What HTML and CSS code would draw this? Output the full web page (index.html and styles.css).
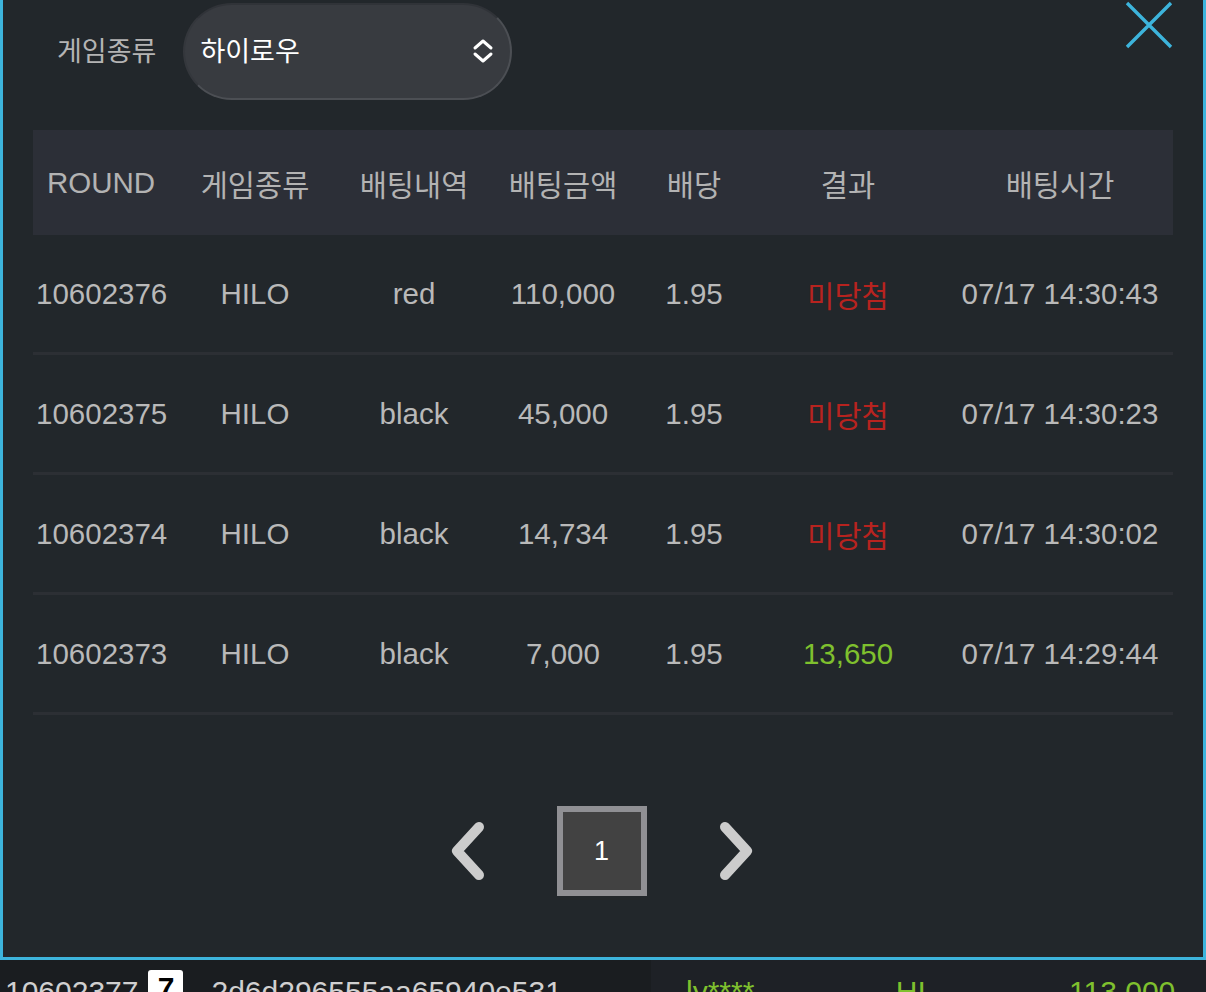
FILE: index.html
```html
<!DOCTYPE html>
<html lang="ko">
  <head>
    <meta charset="UTF-8">
    <title>배팅내역</title>
    <link rel="stylesheet" href="styles.css">
  </head>
  <body>
    <div class="modal">
      <a class="modal__close" href="#" title="닫기">
        <svg width="50" height="50" viewBox="0 0 50 50"><path d="M3 3 L47 47 M47 3 L3 47" stroke="#3db4dc" stroke-width="3.4" fill="none"/></svg>
      </a>
      <div class="filter">
        <span class="filter__label">게임종류</span>
        <div class="filter__select">
          <span>하이로우</span>
          <svg width="22" height="26" viewBox="0 0 22 26"><path d="M3 10 L11 3 L19 10 M3 16 L11 23 L19 16" stroke="#fff" stroke-width="3" fill="none" stroke-linecap="round" stroke-linejoin="round"/></svg>
        </div>
      </div>
      <table class="history">
        <colgroup>
          <col style="width:136px"><col style="width:172px"><col style="width:146px"><col style="width:152px"><col style="width:110px"><col style="width:198px"><col>
        </colgroup>
        <thead>
          <tr><th class="first">ROUND</th><th>게임종류</th><th>배팅내역</th><th>배팅금액</th><th>배당</th><th>결과</th><th>배팅시간</th></tr>
        </thead>
        <tbody>
          <tr><td class="first">10602376</td><td>HILO</td><td>red</td><td>110,000</td><td>1.95</td><td class="lose">미당첨</td><td>07/17 14:30:43</td></tr>
          <tr><td class="first">10602375</td><td>HILO</td><td>black</td><td>45,000</td><td>1.95</td><td class="lose">미당첨</td><td>07/17 14:30:23</td></tr>
          <tr><td class="first">10602374</td><td>HILO</td><td>black</td><td>14,734</td><td>1.95</td><td class="lose">미당첨</td><td>07/17 14:30:02</td></tr>
          <tr><td class="first">10602373</td><td>HILO</td><td>black</td><td>7,000</td><td>1.95</td><td class="win">13,650</td><td>07/17 14:29:44</td></tr>
        </tbody>
      </table>
      <div class="pager">
        <a class="pager__arrow" href="#">
          <svg width="40" height="64" viewBox="0 0 40 64"><path d="M31 8 L9 32 L31 56" stroke="#cccccc" stroke-width="10" fill="none" stroke-linecap="round" stroke-linejoin="round"/></svg>
        </a>
        <span class="pager__page">1</span>
        <a class="pager__arrow" href="#">
          <svg width="40" height="64" viewBox="0 0 40 64"><path d="M9 8 L31 32 L9 56" stroke="#cccccc" stroke-width="10" fill="none" stroke-linecap="round" stroke-linejoin="round"/></svg>
        </a>
      </div>
    </div>
    <div class="ticker">
      <div class="ticker__left">
        <span class="ticker__round">10602377</span>
        <span class="ticker__badge">7</span>
        <span class="ticker__hash">2d6d296555aa65940e531</span>
      </div>
      <div class="ticker__right">
        <span class="ticker__user">ly****</span>
        <span class="ticker__pick">HI</span>
        <span class="ticker__amount">113,000</span>
      </div>
    </div>
  </body>
</html>
```
FILE: styles.css
```css
html, body {
  margin: 0;
  height: 100%;
  overflow: hidden;
}
body {
  background-color: #1b1e22;
  color: #b9b9b9;
  font-family: "Liberation Sans", "Noto Sans CJK KR", sans-serif;
  font-size: 29.5px;
}
a {
  text-decoration: none;
}
.modal {
  position: relative;
  height: 960px;
  box-sizing: border-box;
  background-color: #22272b;
  border: 3px solid #3db4dc;
  border-top: none;
  overflow: hidden;
}
.modal__close {
  position: absolute;
  top: 0;
  right: 29px;
  display: block;
  width: 50px;
  height: 50px;
}
.filter {
  display: flex;
  align-items: center;
  height: 101px;
  padding-left: 54px;
}
.filter__label {
  font-size: 27px;
  color: #b4b4b4;
  margin-right: 27px;
  margin-top: -2px;
}
.filter__select {
  display: flex;
  align-items: center;
  justify-content: space-between;
  box-sizing: border-box;
  width: 329px;
  height: 97px;
  margin-top: 2px;
  padding: 0 16px 0 15px;
  border-radius: 49px;
  background-color: #383b40;
  border: 2px solid #4c4f54;
  border-top-color: #303338;
  border-left-color: #34373c;
  color: #fff;
  font-size: 27px;
}
.filter__select span {
  margin-top: -4px;
}
.filter__select svg {
  margin-top: -2px;
}
.history {
  width: 1140px;
  margin: 29px 30px 0;
  border-collapse: collapse;
  table-layout: fixed;
}
.history th {
  height: 105px;
  padding: 0;
  background-color: #2c2f37;
  font-weight: normal;
  color: #b3b3b3;
  text-align: center;
  vertical-align: middle;
}
.history td {
  height: 117px;
  padding: 0;
  border-bottom: 3px solid #2c2f34;
  text-align: center;
  vertical-align: middle;
}
.history .first {
  text-align: left;
}
.history th.first {
  padding-left: 14px;
}
.history td.first {
  padding-left: 3px;
}
.history .lose {
  color: #b7231f;
}
.history .win {
  color: #7fc02e;
}
.pager {
  display: flex;
  justify-content: center;
  align-items: center;
  margin-top: 91px;
  margin-right: 3px;
}
.pager__arrow {
  display: block;
  width: 40px;
  height: 64px;
}
.pager__page {
  display: flex;
  align-items: center;
  justify-content: center;
  box-sizing: border-box;
  width: 90px;
  height: 90px;
  margin: 0 69px;
  border: 6px solid #909094;
  background-color: #424242;
  color: #fff;
  font-size: 27px;
}
.ticker {
  display: flex;
  height: 32px;
  line-height: 64px;
  font-size: 30px;
}
.ticker__left {
  width: 651px;
  display: flex;
  align-items: flex-start;
  background-color: #1a1d20;
  color: #d0d0d0;
}
.ticker__round {
  margin-left: 5px;
}
.ticker__badge {
  display: block;
  width: 35px;
  height: 40px;
  margin: 10px 0 0 10px;
  border-radius: 3px;
  background-color: #fff;
  color: #000;
  font-weight: bold;
  line-height: 36px;
  text-align: center;
}
.ticker__hash {
  margin-left: 28px;
}
.ticker__right {
  flex: 1;
  background-color: #1e2126;
  color: #7fc02e;
}
.ticker__user {
  margin-left: 35px;
}
.ticker__pick {
  margin-left: 133px;
}
.ticker__amount {
  margin-left: 135px;
}
```
